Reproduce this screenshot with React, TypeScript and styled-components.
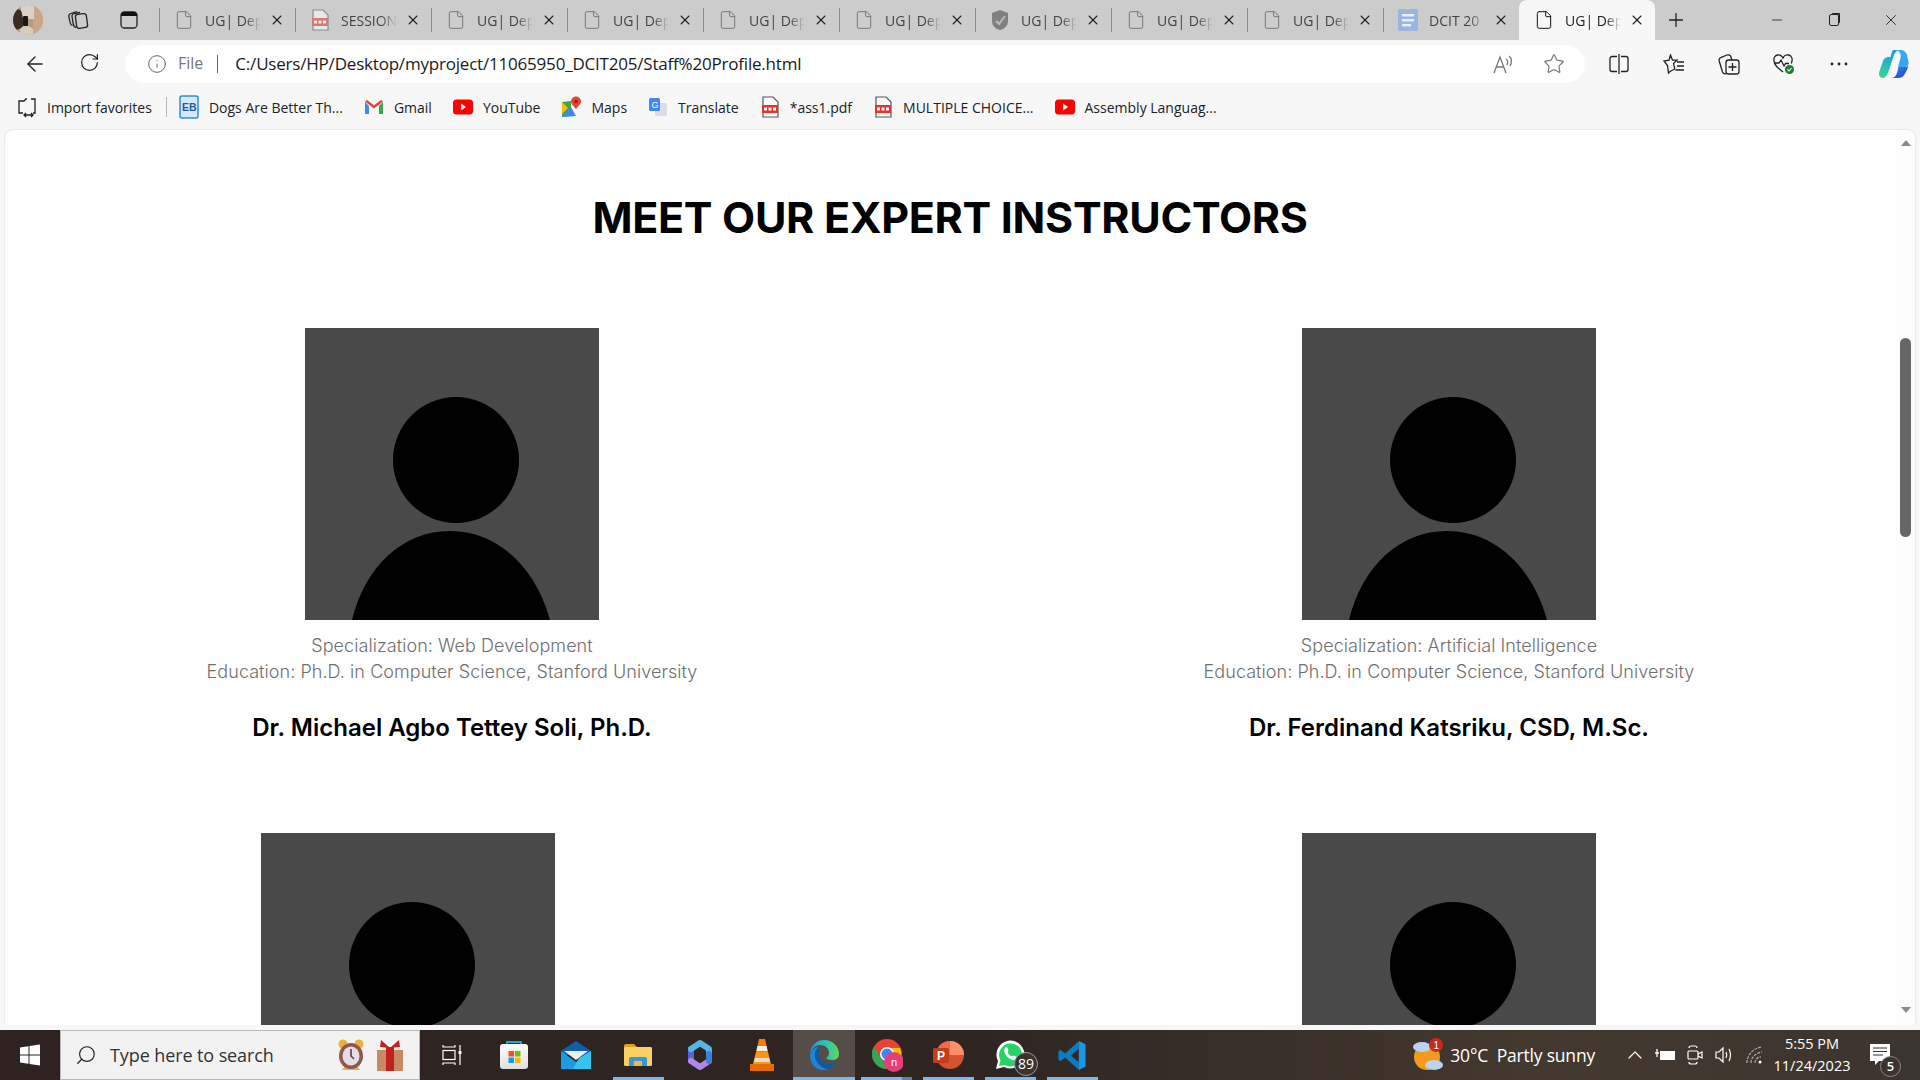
import React from 'react';
import styled, { createGlobalStyle } from 'styled-components';
import { ArrowLeft, RotateCw, Info, Star, Plus, Minus, X, Search, ChevronUp, File } from 'lucide-react';

const GlobalStyle = createGlobalStyle`
  html, body { margin: 0; padding: 0; height: 100%; overflow: hidden; }
  * { box-sizing: border-box; }
  body { font-family: "Open Sans", "Liberation Sans", sans-serif; background: #f7f7f7; }
`;

/* ---------- icons drawn by hand ---------- */

const PdfIcon = ({ faded }: { faded?: boolean }) => (
  <svg width="18" height="22" viewBox="0 0 18 22" opacity={faded ? 0.55 : 1}>
    <path d="M2 1h10l5 5v15H2z" fill="#fff" stroke="#555" strokeWidth="1.2" />
    <rect x="1" y="9" width="16" height="8" fill="#e5322d" />
    <rect x="3" y="11.5" width="3" height="3" fill="#fff" />
    <rect x="7.5" y="11.5" width="3" height="3" fill="#fff" />
    <rect x="12" y="11.5" width="3" height="3" fill="#fff" />
  </svg>
);

const YoutubeIcon = () => (
  <svg width="20" height="16" viewBox="0 0 20 16">
    <rect width="20" height="15" y="0.5" rx="3.5" fill="#f00" />
    <path d="M8 4.5l5 3.5-5 3.5z" fill="#fff" />
  </svg>
);

const GmailIcon = () => (
  <svg width="20" height="16" viewBox="0 0 20 16">
    <path d="M1 3v12h4V7z" fill="#4285f4" />
    <path d="M19 3v12h-4V7z" fill="#34a853" />
    <path d="M1 2.5l9 7 9-7-2-1.5-7 5.2L3 1z" fill="#ea4335" />
  </svg>
);

const MapsIcon = () => (
  <svg width="20" height="22" viewBox="0 0 20 22">
    <path d="M1 6l9-1v15l-9 1z" fill="#34a853" />
    <path d="M1 21l9-10 5 9z" fill="#4285f4" />
    <path d="M1 6l6 6-6 6z" fill="#fbbc04" />
    <path d="M15 13c-3-4-5-5-5-7.500a5 5 0 0 1 10 0C20 8 18 9 15 13z" fill="#ea4335" />
    <circle cx="15" cy="5.500" r="1.800" fill="#a61c14" />
  </svg>
);

const TranslateIcon = () => (
  <svg width="20" height="20" viewBox="0 0 20 20">
    <rect x="7" y="6" width="12" height="13" rx="1.5" fill="#d8dde6" />
    <rect x="1" y="1" width="11" height="13" rx="1.5" fill="#4285f4" />
    <text x="3.5" y="11" fontSize="9" fill="#fff" fontFamily="Liberation Sans">G</text>
  </svg>
);

const EbIcon = () => (
  <svg width="20" height="24" viewBox="0 0 20 24">
    <rect x="1" y="1" width="18" height="22" rx="2" fill="#d7e8f7" stroke="#2f8fdb" strokeWidth="1.5" />
    <text x="3" y="16" fontSize="10.500" fontWeight="700" fill="#1b5e9e" fontFamily="Liberation Sans">EB</text>
  </svg>
);

const ImportIcon = () => (
  <svg width="22" height="22" viewBox="0 0 22 22" fill="none" stroke="#222" strokeWidth="1.3">
    <path d="M7 17H3V5h5l2-2h1M15 3h4v14h-2" />
    <path d="M8 19h9M10 17l-2 2 2 2M15 17l2 2-2 2" />
  </svg>
);

const ShieldIcon = () => (
  <svg width="20" height="22" viewBox="0 0 20 22">
    <path d="M10 1l8 3v8c0 5-4 8-8 9-4-1-8-4-8-9V4z" fill="#808080" />
    <path d="M6 12l3 3 6-8" stroke="#bbb" strokeWidth="2" fill="none" />
  </svg>
);

const DocsIcon = () => (
  <svg width="20" height="22" viewBox="0 0 20 22">
    <rect width="20" height="22" rx="2" fill="#9ab5e4" />
    <rect x="4" y="5" width="12" height="2.4" fill="#e8effa" />
    <rect x="4" y="10" width="12" height="2.4" fill="#e8effa" />
    <rect x="4" y="15" width="9" height="2.4" fill="#e8effa" />
  </svg>
);

const AvatarIcon = () => (
  <svg width="30" height="30" viewBox="0 0 30 30">
    <defs>
      <clipPath id="avatarClip">
        <circle cx="15" cy="15" r="15" />
      </clipPath>
    </defs>
    <g clipPath="url(#avatarClip)">
      <rect width="30" height="30" fill="#b59a85" />
      <rect x="20" y="0" width="10" height="30" fill="#cda689" />
      <rect x="8" y="0" width="13" height="14" fill="#d9d0c6" />
      <path d="M0 6c4-3 9-2 9 3l2 9-2 5-9 3z" fill="#3c2c25" />
      <path d="M7 24c3-4 9-4 13 0v8H7z" fill="#d8ccbd" />
      <rect x="10" y="11" width="5" height="10" rx="1" fill="#1b1716" />
    </g>
  </svg>
);

const WorkspacesIcon = () => (
  <svg width="22" height="20" viewBox="0 0 22 20" fill="none" stroke="#222" strokeWidth="1.300">
    <rect x="9" y="4" width="11" height="14" rx="2.500" transform="rotate(-8 14 11)" />
    <path d="M9 17.500C7.500 17.200 6.800 16.300 6.500 15L5 6.500C4.800 5 5.500 4 7 3.500L13 2.500" />
    <path d="M5.500 15.500C4.200 15 3.500 14 3.200 12.800L1.800 6.500C1.600 5 2.300 4 3.800 3.500L10 1.500" />
  </svg>
);

const VerticalTabsIcon = () => (
  <svg width="18" height="18" viewBox="0 0 18 18">
    <rect x="1" y="1" width="16" height="16" rx="3.500" fill="none" stroke="#222" strokeWidth="1.300" />
    <path d="M1 5V4a3 3 0 0 1 3-3h10a3 3 0 0 1 3 3v1z" fill="#111" />
  </svg>
);

const SplitIcon = () => (
  <svg width="20" height="22" viewBox="0 0 20 22" fill="none" stroke="#222" strokeWidth="1.300">
    <path d="M8 3.500H3a2 2 0 0 0-2 2v11a2 2 0 0 0 2 2h5M12 3.500h5a2 2 0 0 1 2 2v11a2 2 0 0 1-2 2h-5" />
    <path d="M10 1v20" />
  </svg>
);

const FavoritesIcon = () => (
  <svg width="22" height="20" viewBox="0 0 22 20" fill="none" stroke="#222" strokeWidth="1.300">
    <path d="M7.500 1l2 5.200h4.500L10.500 9.500 11.800 15 7 17.500 5.500 19 4.500 11.500 1 7l5-.8z" />
    <path d="M14 8h7M14 12h7M12.500 16h8.500" />
  </svg>
);

const CollectionsIcon = () => (
  <svg width="22" height="22" viewBox="0 0 22 22" fill="none" stroke="#222" strokeWidth="1.300">
    <rect x="8" y="7" width="13" height="14" rx="2.500" />
    <path d="M8 21c-2 0-3-.500-3.500-2L1.200 8c-.5-2 .3-3 2-3.600L9 2c2-.6 3.500.3 4 2l.8 3" />
    <path d="M14.500 10v8M10.500 14h8" />
  </svg>
);

const HealthIcon = () => (
  <svg width="22" height="22" viewBox="0 0 22 22">
    <path d="M10 19C5 15 1 12 1 7.500A4.300 4.300 0 0 1 10 5.500 4.300 4.300 0 0 1 19 7.500c0 1-.2 2-.8 3" fill="none" stroke="#222" strokeWidth="1.300" />
    <path d="M1.500 10H6l2-3 3 6 1.500-2.500H16" fill="none" stroke="#222" strokeWidth="1.300" />
    <circle cx="16.500" cy="16.500" r="4.500" fill="#1e7f34" />
    <path d="M14.500 16.500l1.500 1.500 2.500-3" stroke="#fff" strokeWidth="1.100" fill="none" />
  </svg>
);

const DotsIcon = () => (
  <svg width="18" height="4" viewBox="0 0 18 4" fill="#222">
    <circle cx="2" cy="2" r="1.400" />
    <circle cx="9" cy="2" r="1.400" />
    <circle cx="16" cy="2" r="1.400" />
  </svg>
);

const ReadAloudIcon = () => (
  <svg width="24" height="22" viewBox="0 0 24 22" fill="none" stroke="#777" strokeWidth="1.300">
    <path d="M3 20L9 4l6 16M5.500 14h7" />
    <path d="M15 6c2 1 2 4 1 6M18 3c3 2 3 7 1 10" />
  </svg>
);

const CopilotIcon = () => (
  <svg width="30" height="28" viewBox="0 0 30 28">
    <defs>
      <linearGradient id="copLeft" x1="0.6" y1="0" x2="0.3" y2="1">
        <stop offset="0" stopColor="#1a9fe8" />
        <stop offset="1" stopColor="#39d48f" />
      </linearGradient>
      <linearGradient id="copBottom" x1="0" y1="0" x2="1" y2="1">
        <stop offset="0" stopColor="#2d8fe8" />
        <stop offset="1" stopColor="#2a3fd0" />
      </linearGradient>
    </defs>
    <path d="M14 0h5c-2 1-3 3-4 5l-5 15c-1 3-2 6-5 8H4C1 28-1 25 .5 21L4 11c1-3 3-4 6-4h1.500C12.500 3 13 1 14 0z" fill="url(#copLeft)" />
    <path d="M16 0h6c3 0 5 2 6 5l1.500 7c.5 3-1.500 5-4.500 5h-6l2.500-9c1-4-1-8-5.500-8z" fill="#38a8ee" />
    <path d="M19.500 17h6c1.500 0 3-.5 4-1.500-.5 2-2 6-4 9-1.500 2-3 3.500-6.500 3.500h-7c3 0 5-2 6-5z" fill="url(#copBottom)" />
  </svg>
);

const WindowsLogo = () => (
  <svg width="22" height="22" viewBox="0 0 22 22" fill="#fff">
    <path d="M1 3.500l8.500-1.200v8.200H1zM10.500 2.100L21 .6v9.900H10.500zM1 11.500h8.500v8.200L1 18.500zM10.500 11.500H21v9.900l-10.500-1.500z" />
  </svg>
);

const AlarmIcon = () => (
  <svg width="30" height="32" viewBox="0 0 30 32">
    <circle cx="7" cy="5" r="4.500" fill="#e8b23c" />
    <circle cx="23" cy="5" r="4.500" fill="#e8b23c" />
    <path d="M9 27l-3 4h18l-3-4z" fill="#e8b23c" />
    <ellipse cx="15" cy="17" rx="12" ry="13" fill="#8c5a4c" />
    <ellipse cx="15" cy="17" rx="8.500" ry="9.500" fill="#e6dbe8" />
    <path d="M15 10v7l3 3" stroke="#5d3d3d" strokeWidth="1.600" fill="none" />
  </svg>
);

const GiftIcon = () => (
  <svg width="30" height="32" viewBox="0 0 30 32">
    <rect x="2" y="11" width="26" height="21" fill="#c98a62" />
    <rect x="11" y="8" width="8" height="24" fill="#c0231f" />
    <path d="M15 9L5 8l1-7zM15 9l10-1-1-7z" fill="#c0231f" />
  </svg>
);

const TaskViewIcon = () => (
  <svg width="20" height="20" viewBox="0 0 20 20" fill="none" stroke="#fff" strokeWidth="1.200">
    <path d="M1 0v2h12V0M1 20v-2h12v2" />
    <rect x="1" y="5.500" width="12" height="9" />
    <path d="M18 0v6M18 9v11" />
    <rect x="16.500" y="6" width="3" height="3" fill="#fff" stroke="none" />
  </svg>
);

const StoreIcon = () => (
  <svg width="30" height="30" viewBox="0 0 30 30">
    <defs>
      <linearGradient id="storeBag" x1="0" y1="0" x2="0" y2="1">
        <stop offset="0" stopColor="#fff" />
        <stop offset="1" stopColor="#dedede" />
      </linearGradient>
    </defs>
    <path d="M8 6V2h14v4" fill="none" stroke="#1aa5e8" strokeWidth="1.800" />
    <path d="M1 7a3 3 0 0 1 3-3h22a3 3 0 0 1 3 3v19a3 3 0 0 1-3 3H4a3 3 0 0 1-3-3z" fill="url(#storeBag)" />
    <rect x="9.500" y="11" width="5.500" height="5.500" fill="#f25022" />
    <rect x="16" y="11" width="5.500" height="5.500" fill="#7fba00" />
    <rect x="9.500" y="17.500" width="5.500" height="5.500" fill="#00a4ef" />
    <rect x="16" y="17.500" width="5.500" height="5.500" fill="#ffb900" />
  </svg>
);

const MailIcon = () => (
  <svg width="30" height="28" viewBox="0 0 30 28">
    <path d="M0 10L15 0l15 10v4H0z" fill="#0f5fae" />
    <path d="M3 10h24L15 19z" fill="#e8eef2" />
    <path d="M0 10l15 11 15-11v18H0z" fill="#1a9de4" />
    <path d="M30 10v18H12l6-11z" fill="#35c4f0" />
  </svg>
);

const FilesIcon = () => (
  <svg width="28" height="23" viewBox="0 0 28 23">
    <path d="M0 2a2 2 0 0 1 2-2h8l3 3h13a2 2 0 0 1 2 2v4H0z" fill="#d9a021" />
    <rect y="3" width="28" height="19" rx="1.500" fill="#f9d162" />
    <path d="M5 22v-7a2 2 0 0 1 2-2h14a2 2 0 0 1 2 2v7h-5v-5H10v5z" fill="#3a96dd" />
    <rect x="10" y="17" width="8" height="5" fill="#f2b93b" />
  </svg>
);

const BingIcon = () => (
  <svg width="26" height="30" viewBox="0 0 26 30" fill="none" strokeWidth="6" strokeLinecap="round" strokeLinejoin="round">
    <path d="M4 9v12" stroke="#5a63d8" />
    <path d="M4 9l9-6 9 6v6" stroke="#55b6e6" />
    <path d="M4 21l9 6 9-6" stroke="#b287e8" />
    <path d="M22 14v7" stroke="#3f7fdc" />
  </svg>
);

const VlcIcon = () => (
  <svg width="26" height="34" viewBox="0 0 26 34">
    <path d="M10 1h6l3 13H7z" fill="#f57c00" />
    <path d="M8.500 8h9l1 5h-11z" fill="#eee" />
    <path d="M7 14h12l3 12H4z" fill="#ff9800" />
    <path d="M6 20h14l1 4H5z" fill="#ddd" />
    <path d="M1 26h24v7H1z" fill="#e56d00" />
  </svg>
);

const EdgeIcon = () => (
  <svg width="30" height="32" viewBox="0 0 30 30">
    <defs>
      <linearGradient id="edgeTop" x1="0" y1="0.5" x2="1" y2="0.5">
        <stop offset="0" stopColor="#1b9de2" />
        <stop offset="0.6" stopColor="#2fc6b0" />
        <stop offset="1" stopColor="#63d85a" />
      </linearGradient>
    </defs>
    <path d="M1 15C1 6 8 0 15 0c8 0 15 6 15 14 0 4-3 6-7 6-3 0-5-1-6-2 2-1 3-3 3-5 0-5-4-8-9-8-5 0-9 4-10 10z" fill="url(#edgeTop)" />
    <path d="M1 15c1-5 5-8 9-8-3 2-4 5-4 8 0 7 6 13 13 14-1 .6-3 1-5 1C6 30 1 23 1 15z" fill="#1a86d9" />
    <path d="M10 7c-3 2-4 5-4 8 0 7 6 13 13 14 4-1 7-4 9-8-3 2-6 3-9 3-6 0-11-5-9-17z" fill="#0c59a4" />
  </svg>
);

const ChromeIcon = () => (
  <svg width="34" height="34" viewBox="0 0 34 34">
    <circle cx="18" cy="16" r="15" fill="#ea4335" />
    <path d="M18 31A15 15 0 0 1 5 8.500L12 20z" fill="#34a853" />
    <path d="M18 31L24 20l-6-10h13a15 15 0 0 1-13 21z" fill="#fbbc04" />
    <circle cx="18" cy="16" r="7" fill="#fff" />
    <circle cx="18" cy="16" r="5.500" fill="#4285f4" />
    <circle cx="25" cy="24" r="10" fill="#e63e7a" />
    <text x="22" y="28" fontSize="11" fill="#fff" fontFamily="Liberation Sans">n</text>
  </svg>
);

const PowerPointIcon = () => (
  <svg width="32" height="30" viewBox="0 0 32 30">
    <circle cx="18" cy="15" r="14" fill="#d35230" />
    <path d="M18 1a14 14 0 0 1 14 14H18z" fill="#ff8f6b" />
    <path d="M18 1a14 14 0 0 0-14 14h14z" fill="#ed6c47" />
    <rect x="1" y="8" width="16" height="15" rx="1.500" fill="#c43e1c" />
    <text x="5" y="20" fontSize="12" fontWeight="700" fill="#fff" fontFamily="Liberation Sans">P</text>
  </svg>
);

const WhatsappIcon = () => (
  <svg width="30" height="30" viewBox="0 0 30 30">
    <path d="M1 29l2-8a14 14 0 1 1 6 6z" fill="#fff" />
    <path d="M4 26l1.500-5.500a11.500 11.500 0 1 1 4.500 4.500z" fill="#25d366" />
    <path d="M10 8c1-1 2-1 2.500 0l1 2.500-1 1.500c1 2 2.500 3.500 4.500 4.500l1.500-1 2.500 1c1 .5 1 1.500 0 2.500-2 2-5 1-8-1.500S8 10 10 8z" fill="#fff" />
  </svg>
);

const VsCodeIcon = () => (
  <svg width="30" height="31" viewBox="0 0 30 32">
    <path d="M22 1L8 14 3 10 1 11.500v9L3 22l5-4 14 13V23l-8-7 8-7z" fill="#0a7cc4" />
    <path d="M22 1l7 3.500v23L22 31z" fill="#1a96e2" />
  </svg>
);

const WeatherIcon = () => (
  <svg width="32" height="36" viewBox="0 0 32 36">
    <circle cx="15" cy="20" r="13" fill="#f39a1e" />
    <ellipse cx="10" cy="10" rx="9" ry="5" fill="#bcd3ec" />
    <ellipse cx="22" cy="28" rx="9" ry="5" fill="#bcd3ec" />
    <circle cx="24" cy="8" r="7" fill="#c9281f" />
    <text x="21.500" y="12" fontSize="10" fill="#fff" fontFamily="Liberation Sans">1</text>
  </svg>
);

const BatteryIcon = () => (
  <svg width="20" height="14" viewBox="0 0 20 14">
    <rect x="5.500" y="3.500" width="14" height="8" fill="#fff" stroke="#fff" />
    <path d="M0 5h4M2 1v8" stroke="#fff" strokeWidth="1.300" />
  </svg>
);

const MeetIcon = () => (
  <svg width="16" height="20" viewBox="0 0 16 20" fill="none" stroke="#fff" strokeWidth="1.200">
    <path d="M2 3c0-1.500 1-2 2-2h4c1 0 2 .5 2 2M2 17c0 1.500 1 2 2 2h4c1 0 2-.5 2-2" />
    <rect x="1" y="6" width="10" height="8" rx="1" />
    <path d="M11 9l4-2v6l-4-2" />
  </svg>
);

const VolumeIcon = () => (
  <svg width="20" height="18" viewBox="0 0 20 18" fill="none" stroke="#fff" strokeWidth="1.200">
    <path d="M1 6h3l4-4v14l-4-4H1z" />
    <path d="M11 6c1 2 1 4 0 6M14 3c2 4 2 8 0 12" />
  </svg>
);

const WifiIcon = () => (
  <svg width="18" height="18" viewBox="0 0 18 18" fill="none" stroke="#aaa" strokeWidth="1.200" strokeDasharray="3 1">
    <path d="M1 17C1 9 7 2 16 1M5 17c0-5 4-10 11-11M9 17c0-3 2-6 6-6" />
    <circle cx="14" cy="16" r="1.500" fill="#fff" stroke="none" />
  </svg>
);

const NotificationIcon = () => (
  <svg width="20" height="22" viewBox="0 0 20 22">
    <path d="M0 0h20v17H9l-4 4v-4H0z" fill="#fff" />
    <path d="M3 4h14M3 7.500h14M3 11h10" stroke="#333" strokeWidth="1" />
  </svg>
);

const PersonPhoto = () => (
  <svg width="294" height="292" viewBox="0 0 294 292">
    <rect width="294" height="292" fill="#494949" />
    <ellipse cx="151" cy="132" rx="63" ry="63" fill="#000" />
    <path d="M47 292C60 238 98 203 145 203s85 35 100 89z" fill="#000" />
  </svg>
);

/* ---------- browser chrome ---------- */

const Screen = styled.div`
  width: 1920px;
  height: 1080px;
  display: flex;
  flex-direction: column;
  overflow: hidden;
`;

const TabStrip = styled.div`
  height: 40px;
  flex: none;
  display: flex;
  align-items: center;
  background: #cccccc;
`;

const StripTools = styled.div`
  width: 159px;
  flex: none;
  display: grid;
  grid-template-columns: 56px 43px 60px;
  align-items: center;
  justify-items: center;
`;

const Tab = styled.div<{ $active?: boolean }>`
  width: 136px;
  height: 40px;
  flex: none;
  display: flex;
  align-items: center;
  position: relative;
  padding-left: 14px;
  font-size: 14px;
  color: ${(props) => (props.$active ? '#222' : '#444')};
  background: ${(props) => (props.$active ? '#f7f7f7' : 'transparent')};
  border-radius: ${(props) => (props.$active ? '8px 8px 0 0' : '0')};

  &::before {
    content: '';
    display: ${(props) => (props.$active ? 'none' : 'block')};
    position: absolute;
    left: 0;
    top: 8px;
    bottom: 8px;
    width: 1px;
    background: #8c8c8c;
  }
`;

const TabIcon = styled.div`
  width: 22px;
  display: flex;
  justify-content: center;
  flex: none;
`;

const TabTitle = styled.span`
  width: 56px;
  margin-left: 10px;
  white-space: nowrap;
  overflow: hidden;
  flex: none;
  -webkit-mask-image: linear-gradient(90deg, #000 72%, transparent);
  mask-image: linear-gradient(90deg, #000 72%, transparent);
`;

const TabClose = styled.div`
  margin-left: 8px;
  display: flex;
  color: #222;
`;

const NewTab = styled.div`
  margin-left: 10px;
  display: flex;
  color: #222;
`;

const WindowControls = styled.div`
  margin-left: auto;
  display: flex;
  align-items: center;
  padding-right: 1px;
  color: #222;
`;

const WindowButton = styled.div`
  width: 57px;
  display: flex;
  justify-content: center;
`;

const RestoreBox = styled.div`
  width: 10px;
  height: 12px;
  border: 1px solid #222;
  border-radius: 2px;
  box-shadow: 2px -2px 0 -1px #222;
`;

const Toolbar = styled.div`
  height: 45px;
  flex: none;
  display: flex;
  align-items: center;
  background: #f7f7f7;
  padding-top: 5px;
  padding-bottom: 2px;
`;

const NavButton = styled.div`
  width: 55px;
  flex: none;
  display: flex;
  justify-content: center;
  color: #222;
`;

const NavGroup = styled.div`
  width: 125px;
  flex: none;
  display: flex;
  padding-left: 7px;
`;

const AddressBar = styled.div`
  width: 1460px;
  height: 38px;
  flex: none;
  display: flex;
  align-items: center;
  background: #fff;
  border-radius: 19px;
  padding-left: 22px;
  padding-right: 20px;
`;

const SiteLabel = styled.span`
  font-size: 16px;
  color: #767676;
  margin-left: 11px;
  padding-bottom: 2px;
`;

const AddressDivider = styled.div`
  width: 1px;
  height: 18px;
  background: #666;
  margin: 0 17px 0 14px;
`;

const UrlText = styled.span`
  font-size: 17px;
  color: #1a1a1a;
  letter-spacing: -0.2px;
  padding-bottom: 2px;
`;

const AddressTools = styled.div`
  margin-left: auto;
  display: flex;
  align-items: center;
  gap: 28px;
  color: #777;
`;

const BrowserTools = styled.div`
  flex: 1;
  display: flex;
  align-items: center;
  padding-left: 6px;
  color: #222;
`;

const ToolButton = styled.div`
  width: 55px;
  flex: none;
  display: flex;
  justify-content: center;
`;

const Bookmarks = styled.div`
  height: 45px;
  flex: none;
  display: flex;
  align-items: center;
  padding-left: 16px;
  padding-bottom: 1px;
  background: #f7f7f7;
  font-size: 14px;
  color: #222;
`;

const BookmarkItem = styled.div`
  display: flex;
  align-items: center;
  gap: 9px;
  margin-right: 20px;
  white-space: nowrap;
`;

const BookmarkDivider = styled.div`
  width: 1px;
  height: 20px;
  background: #b5b5b5;
  margin-right: 11px;
  margin-left: -6px;
`;

const BookmarkIconBox = styled.div`
  width: 22px;
  display: flex;
  justify-content: center;
  flex: none;
`;

/* ---------- the page itself ---------- */

const PageFrame = styled.div`
  height: 895px;
  flex: none;
  margin: 0 5px;
  display: flex;
  background: #fff;
  border-radius: 8px 8px 0 0;
  box-shadow: 0 0 2px rgba(0, 0, 0, 0.2);
  overflow: hidden;
`;

const PageContent = styled.main`
  flex: 1;
  height: 100%;
  overflow: hidden;
  padding-top: 59px;
  font-family: Inter, "Liberation Sans", sans-serif;
`;

const Heading = styled.h1`
  margin: 0;
  height: 56px;
  line-height: 56px;
  text-align: center;
  font-size: 43px;
  font-weight: 700;
  color: #000;
  letter-spacing: -0.3px;
  padding-right: 1px;
`;

const CardGrid = styled.div`
  margin-top: 83px;
  padding-left: 202px;
  display: grid;
  grid-template-columns: 997px auto;
  row-gap: 87px;
  justify-items: start;
`;

const Card = styled.article<{ $width: number }>`
  width: ${(props) => props.$width}px;
  display: flex;
  flex-direction: column;
  align-items: center;
  text-align: center;
`;

const Photo = styled.div`
  width: 294px;
  height: 292px;
  display: flex;
`;

const Details = styled.p`
  margin: 13px 0 0;
  font-size: 18px;
  line-height: 26px;
  font-weight: 300;
  letter-spacing: 0.06px;
  color: #6f6f6f;
  white-space: nowrap;
`;

const Name = styled.h3`
  margin: 25px 0 0;
  font-size: 24px;
  line-height: 36px;
  font-weight: 600;
  color: #000;
  white-space: nowrap;
`;

const ScrollTrack = styled.div`
  width: 19px;
  height: 100%;
  flex: none;
  display: flex;
  flex-direction: column;
  align-items: center;
  padding: 10px 4px 12px 4px;
  background: #fdfdfd;
`;

const ScrollArrow = styled.div<{ $down?: boolean }>`
  width: 0;
  height: 0;
  border-left: 5.5px solid transparent;
  border-right: 5.5px solid transparent;
  ${(props) =>
    props.$down ? 'border-top: 6px solid #8a8a8a;' : 'border-bottom: 6px solid #8a8a8a;'}
  flex: none;
  ${(props) => (props.$down ? 'margin-top: auto;' : '')}
`;

const ScrollThumb = styled.div`
  width: 11px;
  height: 199px;
  margin-top: 192px;
  background: #666;
  border-radius: 6px;
  flex: none;
`;

const BottomGap = styled.div`
  height: 5px;
  flex: none;
  background: #f7f7f7;
`;

/* ---------- taskbar ---------- */

const Taskbar = styled.footer`
  height: 50px;
  flex: none;
  display: flex;
  align-items: stretch;
  background: linear-gradient(90deg, #2e2320 0%, #2e2522 50%, #43392f 80%, #3c342e 100%);
  color: #fff;
`;

const StartButton = styled.div`
  width: 60px;
  flex: none;
  display: flex;
  align-items: center;
  justify-content: center;
  padding-right: 1px;
`;

const SearchBox = styled.div`
  width: 360px;
  flex: none;
  display: flex;
  align-items: center;
  background: #f2f2f2;
  border: 1px solid #b8b8b8;
  padding-left: 14px;
  color: #222;
  font-size: 18px;
`;

const SearchLabel = styled.span`
  margin-left: 13px;
  color: #333;
  letter-spacing: -0.1px;
`;

const SearchDecor = styled.div`
  margin-left: auto;
  display: flex;
  align-items: center;
  gap: 9px;
  padding-right: 14px;
`;

const TaskSlots = styled.div`
  display: flex;
  margin-left: 1px;
`;

const TaskSlot = styled.div<{ $open?: boolean; $active?: boolean; $stacked?: boolean }>`
  width: 62px;
  flex: none;
  display: flex;
  align-items: center;
  justify-content: center;
  position: relative;
  background: ${(props) => (props.$active ? '#574d48' : 'transparent')};

  &::after {
    content: '';
    display: ${(props) => (props.$open ? 'block' : 'none')};
    position: absolute;
    bottom: 0;
    left: ${(props) => (props.$active ? '0' : '6px')};
    right: ${(props) => (props.$active ? '0' : '5px')};
    height: 3px;
    background: ${(props) =>
      props.$stacked ? 'linear-gradient(90deg, #76b9ed 80%, #4f86b3 80%)' : '#76b9ed'};
  }
`;

const CountBadge = styled.span`
  position: absolute;
  right: 3px;
  bottom: 4px;
  width: 24px;
  height: 24px;
  border-radius: 50%;
  border: 1px solid #999;
  background: #3a3330;
  font-size: 14px;
  line-height: 22px;
  text-align: center;
`;

const Tray = styled.div`
  margin-left: auto;
  display: flex;
  align-items: center;
  padding-right: 14px;
`;

const WeatherText = styled.span`
  font-size: 17.5px;
  margin-left: 6px;
  white-space: pre;
  letter-spacing: -0.2px;
`;

const TrayIcons = styled.div`
  display: flex;
  align-items: center;
  margin-left: 25px;
`;

const TrayIcon = styled.div`
  width: 30px;
  display: flex;
  justify-content: center;
`;

const Clock = styled.div`
  width: 84px;
  display: flex;
  flex-direction: column;
  align-items: center;
  gap: 4px;
  font-size: 14.5px;
  line-height: 18px;
`;

const Notification = styled.div`
  width: 52px;
  display: flex;
  justify-content: center;
  position: relative;
`;

const NotificationBadge = styled.span`
  position: absolute;
  right: 5px;
  top: 12px;
  width: 21px;
  height: 21px;
  border-radius: 50%;
  border: 1px solid #888;
  background: #3a3330;
  font-size: 13px;
  font-weight: 600;
  line-height: 19px;
  text-align: center;
`;

/* ---------- data ---------- */

const pageIcon = <File size={20} strokeWidth={1.2} color="#777" />;

const tabs = [
  { title: 'UG| Dep', icon: pageIcon },
  { title: 'SESSION', icon: <PdfIcon faded /> },
  { title: 'UG| Dep', icon: pageIcon },
  { title: 'UG| Dep', icon: pageIcon },
  { title: 'UG| Dep', icon: pageIcon },
  { title: 'UG| Dep', icon: pageIcon },
  { title: 'UG| Dep', icon: <ShieldIcon /> },
  { title: 'UG| Dep', icon: pageIcon },
  { title: 'UG| Dep', icon: pageIcon },
  { title: 'DCIT 20', icon: <DocsIcon /> },
  { title: 'UG| Dep', icon: <File size={20} strokeWidth={1.2} color="#111" />, active: true },
];

const bookmarks = [
  { label: 'Dogs Are Better Th...', icon: <EbIcon /> },
  { label: 'Gmail', icon: <GmailIcon /> },
  { label: 'YouTube', icon: <YoutubeIcon /> },
  { label: 'Maps', icon: <MapsIcon /> },
  { label: 'Translate', icon: <TranslateIcon /> },
  { label: '*ass1.pdf', icon: <PdfIcon /> },
  { label: 'MULTIPLE CHOICE...', icon: <PdfIcon /> },
  { label: 'Assembly Languag...', icon: <YoutubeIcon /> },
];

const taskApps = [
  { key: 'view', icon: <TaskViewIcon /> },
  { key: 'store', icon: <StoreIcon /> },
  { key: 'mail', icon: <MailIcon /> },
  { key: 'files', icon: <FilesIcon />, open: true },
  { key: 'bing', icon: <BingIcon /> },
  { key: 'vlc', icon: <VlcIcon /> },
  { key: 'edge', icon: <EdgeIcon />, open: true, active: true },
  { key: 'chrome', icon: <ChromeIcon />, open: true, stacked: true },
  { key: 'ppt', icon: <PowerPointIcon />, open: true },
  { key: 'whatsapp', icon: <WhatsappIcon />, open: true, badge: '89' },
  { key: 'vscode', icon: <VsCodeIcon />, open: true },
];

const instructors = [
  {
    width: 490,
    lines: ['Specialization: Web Development', 'Education: Ph.D. in Computer Science, Stanford University'],
    name: 'Dr. Michael Agbo Tettey Soli, Ph.D.',
  },
  {
    width: 490,
    lines: ['Specialization: Artificial Intelligence', 'Education: Ph.D. in Computer Science, Stanford University'],
    name: 'Dr. Ferdinand Katsriku, CSD, M.Sc.',
  },
  { width: 402 },
  { width: 490 },
];

function App() {
  return (
    <Screen>
      <GlobalStyle />
      <TabStrip>
        <StripTools>
          <AvatarIcon />
          <WorkspacesIcon />
          <VerticalTabsIcon />
        </StripTools>
        {tabs.map((tab, index) => (
          <Tab key={index} $active={tab.active}>
            <TabIcon>{tab.icon}</TabIcon>
            <TabTitle>{tab.title}</TabTitle>
            <TabClose>
              <X size={16} strokeWidth={1.6} />
            </TabClose>
          </Tab>
        ))}
        <NewTab>
          <Plus size={22} strokeWidth={1.4} />
        </NewTab>
        <WindowControls>
          <WindowButton>
            <Minus size={16} strokeWidth={1.2} />
          </WindowButton>
          <WindowButton>
            <RestoreBox />
          </WindowButton>
          <WindowButton>
            <X size={18} strokeWidth={1.2} />
          </WindowButton>
        </WindowControls>
      </TabStrip>

      <Toolbar>
        <NavGroup>
          <NavButton>
            <ArrowLeft size={24} strokeWidth={1.4} />
          </NavButton>
          <NavButton>
            <RotateCw size={21} strokeWidth={1.4} />
          </NavButton>
        </NavGroup>
        <AddressBar>
          <Info size={20} strokeWidth={1.2} color="#666" />
          <SiteLabel>File</SiteLabel>
          <AddressDivider />
          <UrlText>C:/Users/HP/Desktop/myproject/11065950_DCIT205/Staff%20Profile.html</UrlText>
          <AddressTools>
            <ReadAloudIcon />
            <Star size={22} strokeWidth={1.3} />
          </AddressTools>
        </AddressBar>
        <BrowserTools>
          <ToolButton>
            <SplitIcon />
          </ToolButton>
          <ToolButton>
            <FavoritesIcon />
          </ToolButton>
          <ToolButton>
            <CollectionsIcon />
          </ToolButton>
          <ToolButton>
            <HealthIcon />
          </ToolButton>
          <ToolButton>
            <DotsIcon />
          </ToolButton>
          <ToolButton>
            <CopilotIcon />
          </ToolButton>
        </BrowserTools>
      </Toolbar>

      <Bookmarks>
        <BookmarkItem>
          <ImportIcon />
          Import favorites
        </BookmarkItem>
        <BookmarkDivider />
        {bookmarks.map((item) => (
          <BookmarkItem key={item.label}>
            <BookmarkIconBox>{item.icon}</BookmarkIconBox>
            {item.label}
          </BookmarkItem>
        ))}
      </Bookmarks>

      <PageFrame>
        <PageContent>
          <Heading>MEET OUR EXPERT INSTRUCTORS</Heading>
          <CardGrid>
            {instructors.map((person, index) => (
              <Card key={index} $width={person.width}>
                <Photo>
                  <PersonPhoto />
                </Photo>
                {person.lines && (
                  <Details>
                    {person.lines[0]}
                    <br />
                    {person.lines[1]}
                  </Details>
                )}
                {person.name && <Name>{person.name}</Name>}
              </Card>
            ))}
          </CardGrid>
        </PageContent>
        <ScrollTrack>
          <ScrollArrow />
          <ScrollThumb />
          <ScrollArrow $down />
        </ScrollTrack>
      </PageFrame>
      <BottomGap />

      <Taskbar>
        <StartButton>
          <WindowsLogo />
        </StartButton>
        <SearchBox>
          <Search size={22} strokeWidth={1.3} style={{ transform: 'scaleX(-1)' }} />
          <SearchLabel>Type here to search</SearchLabel>
          <SearchDecor>
            <AlarmIcon />
            <GiftIcon />
          </SearchDecor>
        </SearchBox>
        <TaskSlots>
          {taskApps.map((app) => (
            <TaskSlot key={app.key} $open={app.open} $active={app.active} $stacked={app.stacked}>
              {app.icon}
              {app.badge && <CountBadge>{app.badge}</CountBadge>}
            </TaskSlot>
          ))}
        </TaskSlots>
        <Tray>
          <WeatherIcon />
          <WeatherText>30°C  Partly sunny</WeatherText>
          <TrayIcons>
            <TrayIcon>
              <ChevronUp size={24} strokeWidth={1.2} />
            </TrayIcon>
            <TrayIcon>
              <BatteryIcon />
            </TrayIcon>
            <TrayIcon>
              <MeetIcon />
            </TrayIcon>
            <TrayIcon>
              <VolumeIcon />
            </TrayIcon>
            <TrayIcon>
              <WifiIcon />
            </TrayIcon>
          </TrayIcons>
          <Clock>
            <span>5:55 PM</span>
            <span>11/24/2023</span>
          </Clock>
          <Notification>
            <NotificationIcon />
            <NotificationBadge>5</NotificationBadge>
          </Notification>
        </Tray>
      </Taskbar>
    </Screen>
  );
}

export default App;
